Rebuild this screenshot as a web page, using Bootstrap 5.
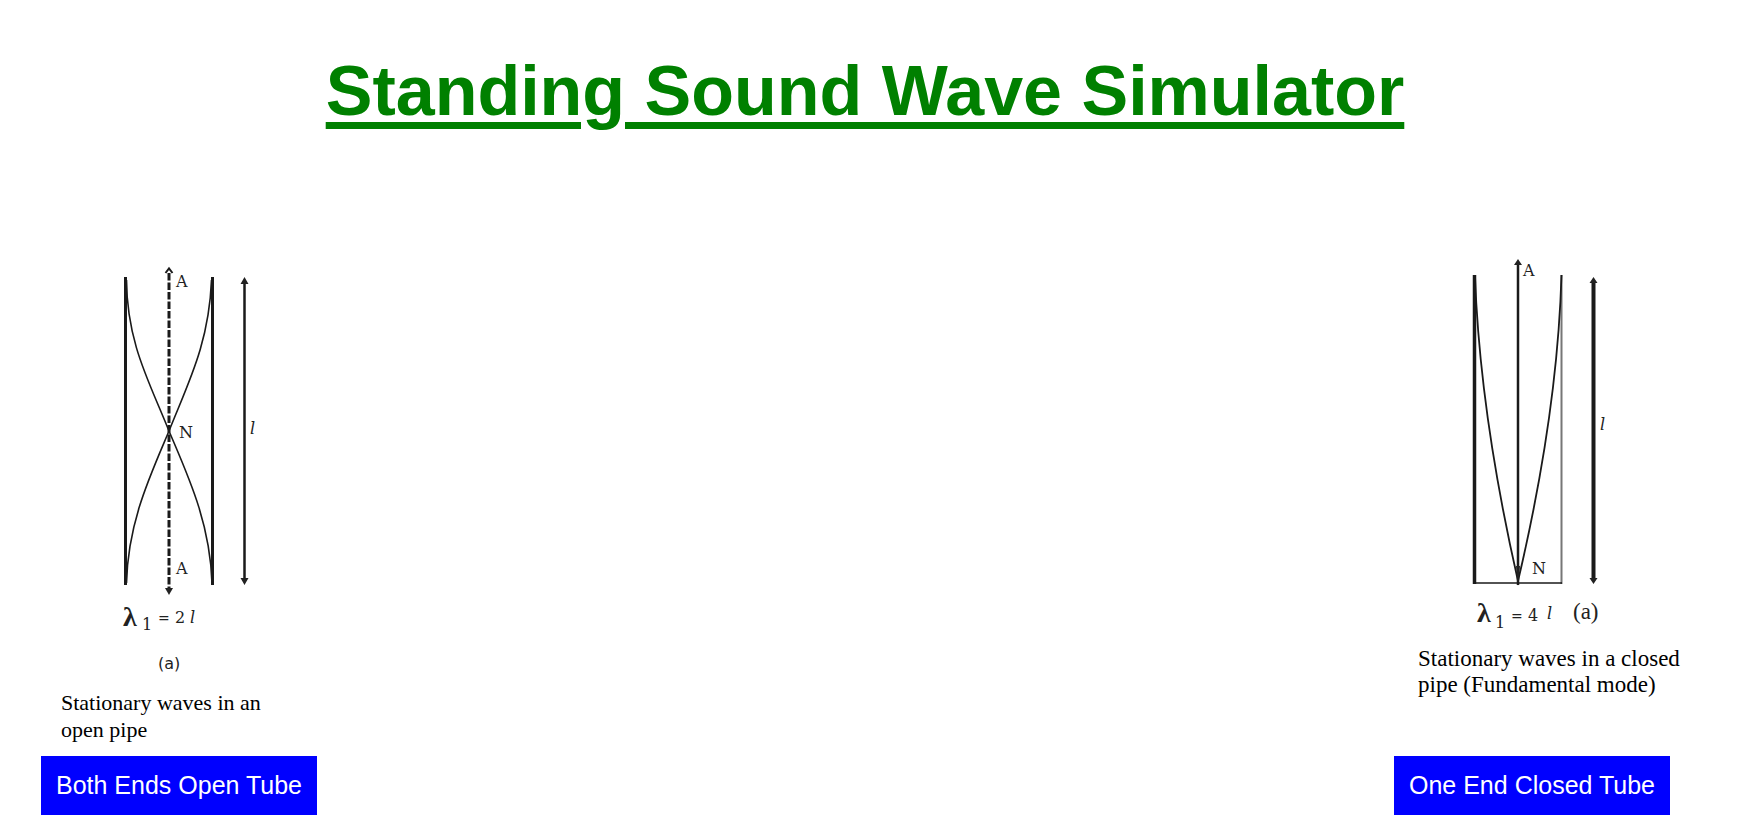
<!DOCTYPE html>
<html lang="en">
<head>
<meta charset="utf-8">
<meta name="viewport" content="width=device-width, initial-scale=1">
<title>Standing Sound Wave Simulator</title>
<link href="https://cdn.jsdelivr.net/npm/bootstrap@5.3.0/dist/css/bootstrap.min.css" rel="stylesheet">
<style>
  body { font-family: "Liberation Sans", Arial, sans-serif; background: #fff; color: #000; }
  header { padding-right: 26px; }
  h1 { font-size: 70px; line-height: 86px; color: green; text-decoration: underline; text-decoration-thickness: 7px; text-underline-offset: 7px; }
  main { margin-top: 122px; padding: 0 62px 8px 41px; }
  .tube { width: 300px; }
  .tube figure { margin-bottom: 13px; }
  .tube svg { display: block; overflow: visible; font-family: "DejaVu Serif", serif; font-size: 16px; }
  .tube figcaption { font-family: "Liberation Serif", "Times New Roman", serif; white-space: nowrap; }
  .caption-open { font-size: 22px; line-height: 27px; padding-left: 20px; }
  .caption-closed { font-size: 23px; line-height: 26px; padding-left: 24px; }
  .tube-btn { --bs-btn-color: #fff; --bs-btn-bg: #00f; --bs-btn-hover-color: #fff; --bs-btn-hover-bg: #0000d0; --bs-btn-active-color: #fff; --bs-btn-active-bg: #0000b0; font-size: 25px; line-height: 29px; padding: 15px; }
  .line { stroke: #1a1a1a; fill: none; }
  .ink { fill: #222; }
  .roman { font-family: "Liberation Serif", "Times New Roman", serif; }
</style>
</head>
<body>
<header class="text-center pt-5">
  <h1 class="fw-bold mb-0">Standing Sound Wave Simulator</h1>
</header>

<main class="d-flex justify-content-between">
  <section class="tube d-flex flex-column align-items-start">
    <figure>
      <svg width="277" height="433" viewBox="0 0 277 433" role="img" aria-label="Open pipe, first mode">
        <!-- pipe walls -->
        <path class="line" stroke-width="3" d="M84.500 21V329M171.500 21V329"/>
        <!-- displacement envelope -->
        <path class="line" stroke-width="1.6" d="M85.500 24C86 88 109 127 128 175C147 220 169 266 171 327M170.500 24C168 88 147 127 128 175C109 220 87 266 85.500 327"/>
        <!-- axis -->
        <path class="line" stroke-width="3" stroke-dasharray="7.500 2" d="M128 17V332"/>
        <path class="line" stroke-width="2" d="M124.500 17L128 12.500L131.500 17"/>
        <path class="ink" d="M124 332H132L128 339Z"/>
        <!-- pipe length -->
        <path class="line" stroke-width="2.500" d="M203.500 26V325"/>
        <path class="ink" d="M199.500 28L203.500 21L207.500 28ZM199.500 322H207.500L203.500 329Z"/>
        <g class="ink">
          <text x="135" y="31">A</text>
          <text x="138" y="182">N</text>
          <text x="135" y="318">A</text>
          <text x="209" y="178" font-style="italic">l</text>
          <text class="roman" x="82" y="370" font-size="28" font-weight="bold">λ</text>
          <text x="101" y="374">1</text>
          <text x="117" y="367" font-size="14">=</text>
          <text x="134" y="367">2</text>
          <text x="149" y="367" font-style="italic">l</text>
          <text x="117" y="413" font-family="DejaVu Sans, sans-serif">(a)</text>
        </g>
      </svg>
      <figcaption class="caption-open">Stationary waves in an<br>open pipe</figcaption>
    </figure>
    <button type="button" class="btn tube-btn border-0 rounded-0 mt-auto">Both Ends Open Tube</button>
  </section>

  <section class="tube d-flex flex-column align-items-start">
    <figure>
      <svg width="277" height="390" viewBox="0 0 277 390" role="img" aria-label="Closed pipe, fundamental mode">
        <!-- pipe walls and closed end -->
        <path class="line" stroke-width="3.500" d="M80.500 19V328"/>
        <path d="M167.500 19V328" stroke="#777" stroke-width="2"/>
        <path class="line" stroke-width="1.500" d="M80 327H168"/>
        <!-- displacement envelope -->
        <path class="line" stroke-width="1.800" d="M81 20C84 105 96 202 124 325M167.500 19C165 105 153 202 124 325"/>
        <!-- axis -->
        <path class="line" stroke-width="2.500" d="M124 7V329"/>
        <path class="ink" d="M120 9L124 3L128 9ZM122 310H126L124 330Z"/>
        <!-- pipe length -->
        <path class="line" stroke-width="4" d="M199.500 25V324"/>
        <path class="ink" d="M195.500 27L199.500 21L203.500 27ZM195.500 322H203.500L199.500 328Z"/>
        <g class="ink">
          <text x="129" y="20">A</text>
          <text x="138" y="318">N</text>
          <text x="206" y="174" font-style="italic">l</text>
          <text class="roman" x="83" y="366" font-size="28" font-weight="bold">λ</text>
          <text x="101" y="372">1</text>
          <text x="117" y="365" font-size="14">=</text>
          <text x="134" y="365">4</text>
          <text x="153" y="363" font-style="italic">l</text>
          <text class="roman" x="179" y="363" font-size="23">(a)</text>
        </g>
      </svg>
      <figcaption class="caption-closed">Stationary waves in a closed<br>pipe (Fundamental mode)</figcaption>
    </figure>
    <button type="button" class="btn tube-btn border-0 rounded-0 mt-auto">One End Closed Tube</button>
  </section>
</main>
<script src="https://cdn.jsdelivr.net/npm/bootstrap@5.3.0/dist/js/bootstrap.bundle.min.js"></script>
</body>
</html>
